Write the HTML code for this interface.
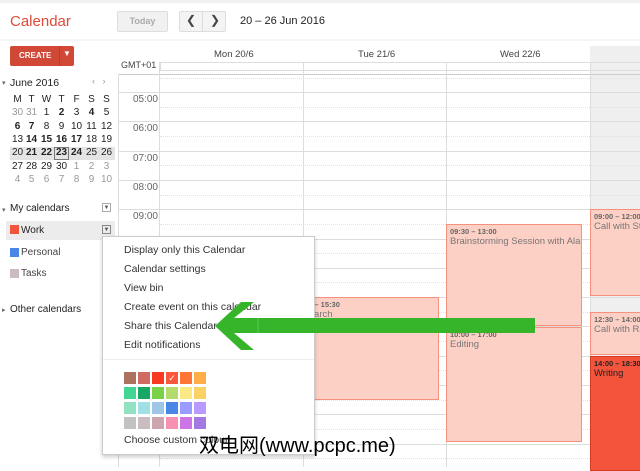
<!DOCTYPE html>
<html><head><meta charset="utf-8"><style>
*{box-sizing:border-box;margin:0;padding:0}
body{width:640px;height:467px;overflow:hidden;background:#fff;font-family:"Liberation Sans",Arial,sans-serif;color:#222;position:relative}
.a{position:absolute}
.hl{position:absolute;left:118px;width:522px;height:1px;background:#ddd}
.dl{position:absolute;left:160px;width:480px;height:0;border-top:1px dotted #e2e2e2}
.hr{position:absolute;left:128px;width:30px;text-align:right;font-size:10px;color:#666}
.mc{position:absolute;width:15px;text-align:center;font-size:10px}
.ev{position:absolute;background:#fdd0c6;border:1px solid #f7907c;font-size:9.5px;color:#777;padding:2px 3px;overflow:hidden;white-space:nowrap}
.ev b{font-size:7.5px;color:#666;display:block}
.mi{position:absolute;left:124px;font-size:10.5px;color:#333}
.sw{position:absolute;width:12px;height:12px}
</style></head><body>
<div class="a" style="left:0;top:0;width:640px;height:3px;background:#f1f1f1"></div>
<div class="a" style="left:10px;top:13px;font-size:15px;color:#dd4b39">Calendar</div>
<div class="a" style="left:117px;top:11px;width:51px;height:21px;background:#f1f1f1;border:1px solid #ddd;border-radius:2px;font-size:9px;font-weight:bold;color:#aaa;text-align:center;line-height:19px">Today</div>
<div class="a" style="left:179px;top:11px;width:47px;height:21px;background:#f4f4f4;border:1px solid #ddd;border-radius:2px"></div>
<div class="a" style="left:202px;top:11px;width:1px;height:21px;background:#ddd"></div>
<div class="a" style="left:186px;top:13px;font-size:12px;color:#444">&#10094;</div>
<div class="a" style="left:210px;top:13px;font-size:12px;color:#444">&#10095;</div>
<div class="a" style="left:240px;top:15px;font-size:11px">20 – 26 Jun 2016</div>
<div class="a" style="left:0;top:39px;width:640px;height:2px;background:#f5f5f5"></div>
<div class="a" style="left:10px;top:46px;width:64px;height:20px;background:#d14836;border-radius:2px"></div>
<div class="a" style="left:59px;top:46px;width:1px;height:20px;background:#b73a2a"></div>
<div class="a" style="left:19px;top:51px;font-size:8px;font-weight:bold;color:#fff">CREATE</div>
<div class="a" style="left:63px;top:49px;font-size:8px;color:#fff">&#9660;</div>
<div class="a" style="left:2px;top:79px;font-size:7px;color:#666">&#9662;</div>
<div class="a" style="left:10px;top:77px;font-size:10.5px">June 2016</div>
<div class="a" style="left:92px;top:76px;font-size:9px;color:#999">&#8249;&nbsp;&nbsp;&nbsp;&#8250;</div>
<div class="a" style="left:10px;top:147px;width:105px;height:13px;background:#e4e4e4"></div>
<div class="a" style="left:54px;top:147px;width:15px;height:13px;border:1px solid #777"></div>
<div id="mc"></div>
<div class="a" style="left:2px;top:206px;font-size:7px;color:#666">&#9662;</div>
<div class="a" style="left:10px;top:203px;font-size:10px">My calendars</div>
<div class="a" style="left:102px;top:203px;width:9px;height:9px;border:1px solid #aaa;font-size:6px;color:#555;text-align:center;line-height:8px">&#9660;</div>
<div class="a" style="left:6px;top:221px;width:109px;height:19px;background:#ececec"></div>
<div class="a" style="left:10px;top:225px;width:9px;height:9px;background:#f4543c"></div>
<div class="a" style="left:21px;top:225px;font-size:10px">Work</div>
<div class="a" style="left:102px;top:225px;width:9px;height:9px;border:1px solid #888;font-size:6px;color:#555;text-align:center;line-height:8px">&#9660;</div>
<div class="a" style="left:10px;top:248px;width:9px;height:9px;background:#4986e7"></div>
<div class="a" style="left:21px;top:247px;font-size:10px;color:#444">Personal</div>
<div class="a" style="left:10px;top:269px;width:9px;height:9px;background:#cabdbf"></div>
<div class="a" style="left:21px;top:268px;font-size:10px;color:#444">Tasks</div>
<div class="a" style="left:2px;top:306px;font-size:7px;color:#666">&#9656;</div>
<div class="a" style="left:10px;top:304px;font-size:10px">Other calendars</div>
<div class="a" style="left:590px;top:46px;width:50px;height:421px;background:#efefef"></div>
<div class="a" style="left:214px;top:49px;font-size:9.5px;color:#444">Mon 20/6</div>
<div class="a" style="left:358px;top:49px;font-size:9.5px;color:#444">Tue 21/6</div>
<div class="a" style="left:500px;top:49px;font-size:9.5px;color:#444">Wed 22/6</div>
<div class="a" style="left:121px;top:60px;font-size:9px;color:#444">GMT+01</div>
<div class="a" style="left:160px;top:62px;width:480px;height:9px;border:1px solid #ddd;border-right:none"></div>
<div class="hl" style="top:74px;background:#ccc"></div>
<div class="a" style="left:118px;top:74px;width:1px;height:393px;background:#ddd"></div>
<div class="a" style="left:159px;top:62px;width:1px;height:405px;background:#ddd"></div>
<div class="a" style="left:303px;top:62px;width:1px;height:405px;background:#ddd"></div>
<div class="a" style="left:446px;top:62px;width:1px;height:405px;background:#ddd"></div>
<div class="a" style="left:590px;top:62px;width:1px;height:405px;background:#ddd"></div>
<div id="hrs"></div>
<div class="ev" style="left:300px;top:297px;width:139px;height:103px"><b>00 – 15:30</b>search</div>
<div class="ev" style="left:446px;top:224px;width:136px;height:102px"><b>09:30 – 13:00</b>Brainstorming Session with Alan</div>
<div class="ev" style="left:446px;top:327px;width:136px;height:115px"><b>10:00 – 17:00</b>Editing</div>
<div class="ev" style="left:590px;top:209px;width:55px;height:87px"><b>09:00 – 12:00</b>Call with Ste</div>
<div class="ev" style="left:590px;top:312px;width:55px;height:43px"><b>12:30 – 14:00</b>Call with Rac</div>
<div class="ev" style="left:590px;top:356px;width:55px;height:115px;background:#f4543c;border-color:#d83a22;color:#222"><b style="color:#222">14:00 – 18:30</b>Writing</div>
<div class="a" style="left:102px;top:236px;width:213px;height:219px;background:#fff;border:1px solid #ccc;box-shadow:0 2px 4px rgba(0,0,0,.2)"></div>
<div class="mi" style="top:244px">Display only this Calendar</div>
<div class="mi" style="top:263px">Calendar settings</div>
<div class="mi" style="top:282px">View bin</div>
<div class="mi" style="top:301px">Create event on this calendar</div>
<div class="mi" style="top:320px">Share this Calendar</div>
<div class="mi" style="top:339px">Edit notifications</div>
<div class="a" style="left:103px;top:359px;width:211px;height:1px;background:#eee"></div>
<div id="sw"></div>
<div class="mi" style="top:434px">Choose custom colour</div>
<svg class="a" style="left:0;top:0" width="640" height="467"><polygon points="215,326 241,302 254,302 234,318 535,318 535,333 234,333 254,350 241,350" fill="#37b52a"/><line x1="258" y1="318" x2="258" y2="333" stroke="#5cc650"/></svg>
<div class="a" style="left:199px;top:429px;font-size:20px;color:#000;font-family:'Liberation Sans','Noto Sans CJK SC',sans-serif;white-space:nowrap">双电网(www.pcpc.me)</div>
<script>
var h='';var r=["M T W T F S S","30 31 1 2 3 4 5","6 7 8 9 10 11 12","13 14 15 16 17 18 19","20 21 22 23 24 25 26","27 28 29 30 1 2 3","4 5 6 7 8 9 10"];
var xs=[10,24,39,54,69,84,99];
var bold={"2":1,"4":1,"6":1,"7":1,"14":1,"15":1,"16":1,"17":1,"21":1,"22":1,"23":1,"24":1};
r.forEach(function(l,i){l.split(' ').forEach(function(d,j){var c='#222',w='normal';
if(i==1&&j<2)c='#999';if(i==5&&j>3)c='#999';if(i==6)c='#999';if(bold[d]&&i>0&&i<5&&!(i==1&&j<2))w='bold';
h+='<div class="mc" style="left:'+xs[j]+'px;top:'+(94+i*13.3)+'px;color:'+c+';font-weight:'+w+'">'+d+'</div>';});});
document.getElementById('mc').innerHTML=h;
h='';for(var i=0;i<13;i++){var y=92+i*29.3;h+='<div class="hl" style="top:'+y+'px"></div><div class="dl" style="top:'+(y+14.6)+'px"></div>';
if(i<5)h+='<div class="hr" style="top:'+(y+2)+'px">'+('0'+(5+i)).slice(-2)+':00</div>';}
h+='<div class="dl" style="top:78px"></div>';
document.getElementById('hrs').innerHTML=h;
var cs=[["#ac725e","#d06b64","#f83a22","#fa573c","#ff7537","#ffad46"],["#42d692","#16a765","#7bd148","#b3dc6c","#fbe983","#fad165"],["#92e1c0","#9fe1e7","#9fc6e7","#4986e7","#9a9cff","#b99aff"],["#c2c2c2","#cabdbf","#cca6ac","#f691b2","#cd74e6","#a47ae2"]];
h='';cs.forEach(function(row,i){row.forEach(function(c,j){h+='<div class="sw" style="left:'+(124+j*14)+'px;top:'+(372+i*15)+'px;background:'+c+';color:#fff;font-size:9px;text-align:center;line-height:12px">'+(i==0&&j==3?'&#10003;':'')+'</div>';});});
document.getElementById('sw').innerHTML=h;
</script>
</body></html>
